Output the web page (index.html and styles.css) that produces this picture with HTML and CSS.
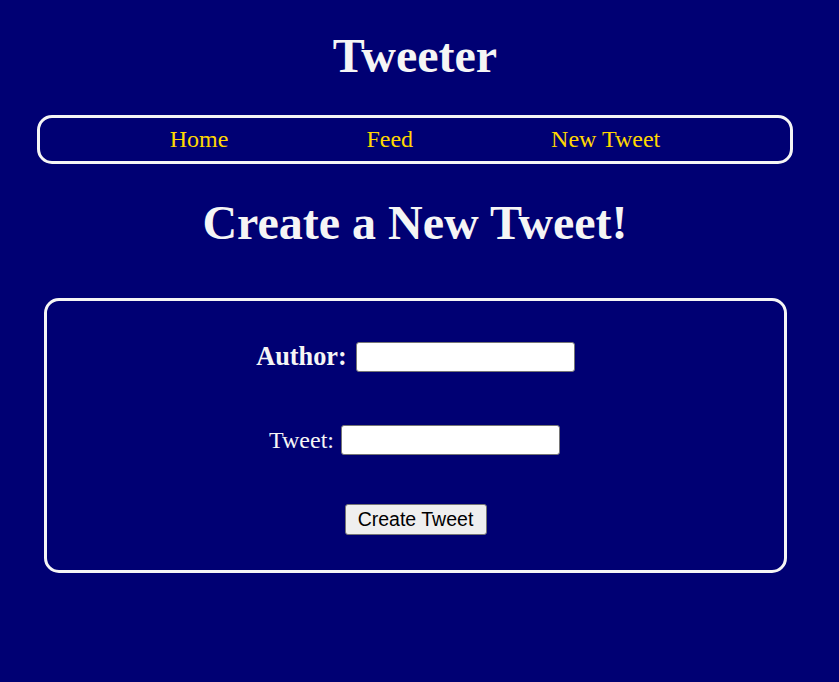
FILE: index.html
```html
<!DOCTYPE html>
<html lang="en">
<head>
<meta charset="utf-8">
<title>Tweeter</title>
<link rel="stylesheet" href="styles.css">
</head>
<body>
<div class="page">
  <h1 class="site-title">Tweeter</h1>
  <nav class="nav">
    <a class="nav-link" href="#">Home</a>
    <a class="nav-link" href="#">Feed</a>
    <a class="nav-link" href="#">New Tweet</a>
  </nav>
  <h2 class="page-title">Create a New Tweet!</h2>
  <form class="tweet-form">
    <div class="row">
      <label class="label label-bold" for="author">Author:</label>
      <input class="field" id="author" type="text">
    </div>
    <div class="row row-tweet">
      <label class="label" for="tweet">Tweet:</label>
      <input class="field" id="tweet" type="text">
    </div>
    <button class="submit" type="button">Create Tweet</button>
  </form>
</div>
</body>
</html>
```

FILE: styles.css
```css
html, body {
  margin: 0;
  padding: 0;
  background: #000073;
}

body {
  font-family: "Liberation Serif", "Times New Roman", serif;
  color: #f5f5f5;
}

.page {
  width: 830px;
  display: flex;
  flex-direction: column;
}

.site-title {
  margin: 0;
  padding-top: 29px;
  font-size: 48px;
  line-height: 53px;
  font-weight: bold;
  text-align: center;
}

.nav {
  margin: 33px 37px 0;
  height: 43px;
  border: 3px solid #f5f5f5;
  border-radius: 15px;
  display: flex;
  justify-content: center;
  align-items: center;
  gap: 138px;
}

.nav-link {
  color: #ffd700;
  text-decoration: none;
  font-size: 24px;
  line-height: 43px;
}

.page-title {
  margin: 0;
  padding-top: 32px;
  font-size: 48px;
  line-height: 53px;
  font-weight: bold;
  text-align: center;
}

.tweet-form {
  margin: 49px 43px 0 44px;
  border: 3px solid #f5f5f5;
  border-radius: 15px;
  display: flex;
  flex-direction: column;
  align-items: center;
  padding: 41px 0 35px;
}

.row {
  display: flex;
  align-items: center;
  gap: 9px;
  height: 30px;
}

.row-tweet {
  margin-top: 53px;
  gap: 7px;
  margin-right: 2px;
}

.label {
  font-size: 24px;
}

.label-bold {
  font-size: 26.3px;
  font-weight: bold;
}

.field {
  box-sizing: border-box;
  width: 219px;
  height: 30px;
  margin: 0;
  border: 1px solid #767676;
  border-radius: 3px;
  background: #fff;
  padding: 0 4px;
}

.submit {
  box-sizing: border-box;
  margin-top: 49px;
  width: 142px;
  height: 31px;
  padding: 0;
  border: 1px solid #767676;
  border-radius: 3px;
  background: #efefef;
  color: #000;
  font-family: "Liberation Sans", Arial, sans-serif;
  font-size: 19.5px;
}
```
